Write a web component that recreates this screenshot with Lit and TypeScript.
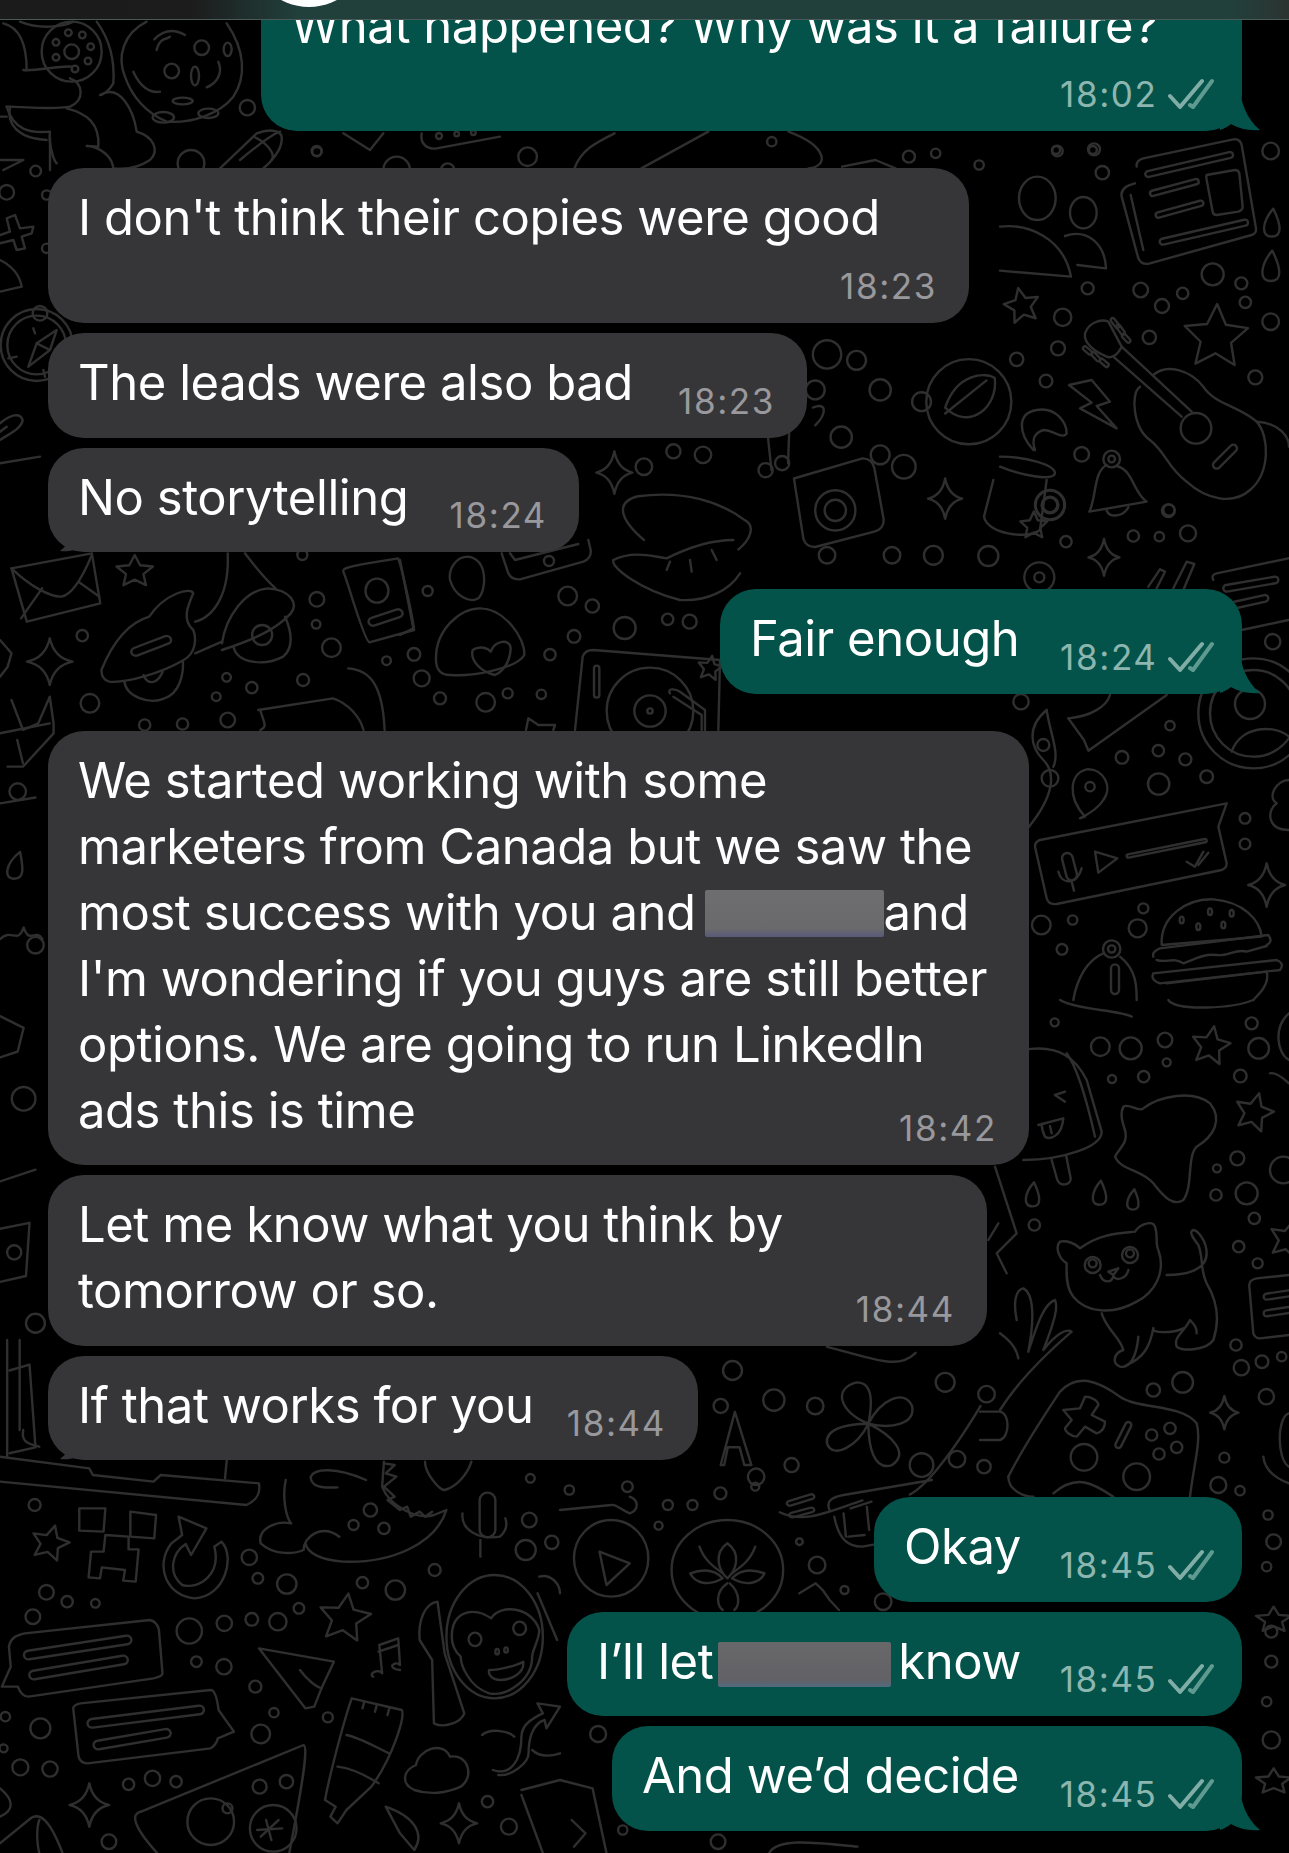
import { LitElement, html, css, svg } from "lit";
import { customElement } from "lit/decorators.js";

const star = (cx: number, cy: number, R: number, rot = -8) => {
  let d = "";
  for (let i = 0; i < 10; i++) {
    const r = i % 2 ? R * 0.48 : R;
    const a = ((rot - 90 + i * 36) * Math.PI) / 180;
    d += (i ? "L" : "M") + (cx + r * Math.cos(a)).toFixed(1) + " " + (cy + r * Math.sin(a)).toFixed(1);
  }
  return d + "Z";
};
const sparkle = (cx: number, cy: number, R: number) => {
  const k = R * 0.16;
  const w = R * 0.85;
  return `M${cx} ${cy - R}Q${cx + k} ${cy - k} ${cx + w} ${cy}Q${cx + k} ${cy + k} ${cx} ${cy + R}Q${cx - k} ${cy + k} ${cx - w} ${cy}Q${cx - k} ${cy - k} ${cx} ${cy - R}Z`;
};
const cap = (x1: number, y1: number, x2: number, y2: number, w: number) => {
  const dx = x2 - x1, dy = y2 - y1, l = Math.hypot(dx, dy), r = w / 2;
  const nx = (-dy / l) * r, ny = (dx / l) * r;
  return `M${x1 + nx} ${y1 + ny}L${x2 + nx} ${y2 + ny}A${r} ${r} 0 0 0 ${x2 - nx} ${y2 - ny}L${x1 - nx} ${y1 - ny}A${r} ${r} 0 0 0 ${x1 + nx} ${y1 + ny}Z`;
};
const ell = (cx: number, cy: number, rx: number, ry: number) =>
  `M${cx - rx} ${cy}A${rx} ${ry} 0 1 0 ${cx + rx} ${cy}A${rx} ${ry} 0 1 0 ${cx - rx} ${cy}Z`;
const drop = (cx: number, cy: number, s: number) =>
  `M${cx + 5} ${cy - s}C${cx - s * 0.6} ${cy - s * 0.2} ${cx - s * 0.8} ${cy + s * 0.9} ${cx} ${cy + s * 0.9}C${cx + s * 0.8} ${cy + s * 0.9} ${cx + s * 0.6} ${cy} ${cx + 5} ${cy - s}Z`;

type Group = { x: number; y: number; zx: number; zy: number; c: number[][]; p: string[] };

const GROUPS: Group[] = [
  // top-left figure, donut and cookie
  { x: 0, y: 0, zx: 3, zy: 3,
    c: [[215,155,90],[215,155,22],[205,98,10],[247,105,10],[272,140,10],[264,183,10],[168,172,10],[168,127,10],[225,207,10],[742,323,23],[950,453,15],[573,490,40],[605,143,22],[515,213,22],[1190,510,40],[1343,510,20],[1317,408,9],[1370,402,7],[1420,398,7]],
    p: ["M70 210C100 215 190 195 215 200","M210 235C250 250 255 300 210 320C150 330 80 320 20 320","M30 320C20 370 50 415 140 420","M200 325C260 340 300 370 295 440L260 438C300 440 340 470 340 510","M150 415L150 510","M10 70C50 80 80 120 80 210","M0 350L20 350","M0 480L70 480L10 510","M60 65C120 90 190 80 220 65",
      "M290 65C330 120 345 180 340 250C330 270 310 285 300 285C360 250 400 330 410 395C460 410 480 450 450 480C420 500 380 510 340 505",
      "M440 65C370 100 350 170 375 230C395 290 440 340 500 365C580 370 660 340 700 290C740 230 735 150 680 70",
      ell(585,228,12,28),ell(683,148,12,20),ell(548,303,30,10),ell(490,352,32,16),ell(625,340,30,14),
      "M463 118C490 90 520 85 555 105","M470 150C480 110 500 120 510 110","M400 215C420 260 450 280 480 275","M620 262C650 250 670 220 655 185",
      "M660 505L770 400C810 385 850 390 845 420C845 450 810 490 790 505","M760 410C790 420 830 460 815 480","M1030 400L1110 450L1150 400","M1265 400C1260 430 1280 450 1310 445L1500 410"] },
  // left edge
  { x: 0, y: 100, zx: 3, zy: 3,
    c: [[107,213,16],[20,277,22],[140,445,14],[140,285,14],[110,735,108],[110,735,88],[120,640,22]],
    p: ["M20 20C40 90 90 100 150 95C145 130 160 180 170 190","M0 405L30 395L20 355L45 345L60 385L100 380L95 400L65 410L75 445L50 450L40 420L0 430","M0 480C40 500 60 530 65 560L0 575","M85 800L110 730L170 690L150 750Z","M110 730L150 750","M25 775L50 770","M100 685L105 700","M130 810L135 830","M0 1020C30 1000 65 985 68 960C60 935 30 945 0 970","M0 995L20 980","M0 1090L120 1070"] },
  // newspaper, people, guitar
  { x: 1000, y: 100, zx: 3, zy: 3,
    c: [[172,153,16],[282,148,18],[307,218,20],[812,153,25],[422,570,22],[486,618,21],[548,580,17],[638,523,33],[724,550,18],[736,607,17],[812,665,25],[263,565,18],[188,652,26],[174,745,21],[448,712,20],[50,778,20],[138,843,19],[766,832,21],[245,1063,22],[505,1232,19],[588,985,46],[150,1215,45],[150,1215,25],[335,1077,25],[335,1077,10]],
    p: [ell(112,295,55,65),ell(250,338,40,47),"M0 380C80 370 190 410 213 530L0 512","M195 408C260 385 315 430 318 505L232 495",
      "M410 200Q408 180 430 175L700 118Q720 115 725 135L768 385Q770 400 755 405L450 490Q425 497 415 475L365 290Q360 260 405 250",
      cap(445,222,690,165,18),cap(458,280,588,245,16),cap(475,345,602,310,16),cap(488,425,735,368,18),
      "M620 225L705 210Q715 210 718 220L728 320Q728 330 715 335L650 345Q640 345 638 335L620 240Q618 228 620 225Z","M392 285L430 450",
      star(66,618,55,-12),star(648,712,100,2),drop(815,370,44),drop(812,500,48),
      "M255 700C265 670 300 655 325 665L365 740C350 770 330 775 320 770C285 755 250 730 255 700Z",
      cap(338,660,352,678,12),cap(355,680,368,698,12),cap(372,708,385,722,12),cap(255,745,270,758,12),cap(280,762,295,778,12),cap(305,782,320,795,12),
      "M340 770L545 950","M365 740L575 935",
      "M460 825C500 790 570 810 610 860C640 910 720 920 770 965C810 1010 810 1120 750 1170C700 1215 620 1200 560 1145C500 1100 500 1060 450 1020C400 985 390 880 420 860",
      cap(650,1095,700,1045,22),"M207 855L275 840L330 905L290 918L350 985L240 925L275 908Z",
      "M100 1050C55 1000 50 940 110 930C170 920 200 970 200 1000C190 1020 160 990 130 990C100 1000 95 1020 105 1050",
      "M0 1070C80 1070 165 1095 165 1120C160 1145 60 1125 0 1100",
      "M320 1095C280 1115 290 1190 268 1235L440 1205C400 1180 400 1110 350 1098","M320 1232C330 1255 370 1250 385 1222","M770 965C840 970 867 1010 867 1040"] },
  // right column, mid
  { x: 960, y: 480, zx: 3, zy: 3,
    c: [[85,228,30],[318,185,17],[520,168,17],[598,170,14],[684,160,24],[627,90,17],[938,485,23],[183,665,23],[630,737,14],[595,812,17],[486,832,19],[676,838,18],[596,912,32],[740,890,19],[855,1015,16],[855,1092,16],[550,1285,15],[533,1345,27],[338,1320,14],[244,1335,28],[306,1408,16],[390,920,14],[238,292,45],[238,292,15],[270,75,43],[270,75,22],[880,700,165],[880,700,130],[870,672,45],[250,795,18],[270,895,25],[455,1407,26],[455,1407,11]],
    p: ["M100 0L72 110C80 160 200 180 240 150L260 0",sparkle(432,232,55),"M565 320L600 268L615 275L590 325","M640 325L680 245L703 252L670 330",
      "M760 300Q752 285 770 280L985 235",cap(800,325,945,300,20),cap(825,375,915,355,20),"M845 450L985 420","M815 815C840 740 940 730 987 770",
      "M260 690C200 740 210 800 250 840C290 880 280 950 207 1040","M260 690C270 760 300 820 280 860",
      "M325 715C390 710 440 680 450 645","M325 715L372 780L385 812L620 645",
      "M375 1010C320 950 330 880 380 868C430 865 460 920 430 960C415 985 390 1000 360 1015Z",
      "M225 1100Q225 1085 240 1080L800 970L775 1040L800 1150Q800 1165 785 1170L290 1272Q265 1275 260 1255Z",
      cap(322,1135,335,1185,32),"M295 1175C305 1215 350 1215 365 1165","M335 1205L342 1232","M405 1115L472 1135L415 1178Z",cap(505,1128,735,1082,10),
      "M680 1145L705 1160L730 1115","M715 1155L745 1118",
      "M605 1395C600 1310 680 1255 760 1258C850 1265 900 1320 905 1370L605 1395","M580 1430Q575 1415 600 1405L925 1365Q940 1385 920 1395",
      "M590 1440C620 1450 640 1430 670 1450C700 1440 730 1420 770 1425C800 1430 830 1405 860 1415L920 1398","M580 1480L950 1440Q975 1450 960 1470L600 1510Q570 1500 580 1480","M620 1510L920 1475C930 1510 900 1540 880 1560",
      ell(665,1320,6,10),ell(715,1340,6,10),ell(750,1295,6,10),ell(790,1335,6,10),ell(815,1300,6,10),
      "M430 1420C380 1440 350 1500 340 1560","M480 1430C530 1470 530 1520 530 1560",cap(465,1465,465,1530,24),sparkle(920,1215,65),
      "M987 900C950 900 920 950 950 970C920 990 920 1050 987 1050"] },
  // right column, popsicle, cat, controller
  { x: 980, y: 1000, zx: 3, zy: 3,
    c: [[224,67,12],[361,140,28],[452,145,33],[555,120,22],[560,187,12],[815,70,18],[836,145,31],[396,237,12],[491,230,17],[781,228,19],[772,475,21],[711,505,12],[708,585,17],[800,580,33],[823,655,17],[776,740,17],[833,790,15],[163,675,17],[768,1035,17],[784,1103,23],[846,1085,19],[905,1070,14],[520,1170,20],[608,1147,31],[859,1190,23],[733,1373,15],[715,1455,24],[780,1472,14],[312,1372,40],[470,1430,40],[515,1305,17],[570,1285,17],[590,1342,17],[537,1362,17],[12,1400,20],[338,795,24],[338,790,12],[450,765,24],[450,760,12],[910,510,40]],
    p: ["M240 0C290 30 420 30 455 50","M565 0C590 35 760 25 820 0",star(692,138,60,10),star(822,338,60,15),star(925,720,60,15),
      "M130 150C240 130 290 180 320 240L365 395C365 440 250 480 130 480","M260 160C290 200 320 300 345 410","M215 480L232 540C245 565 275 550 272 535L258 465","M225 285L255 275","M225 285L255 305","M175 375L250 355C245 410 210 420 195 410C190 400 185 385 185 372","M210 378L215 400",
      drop(157,585,38),drop(358,580,38),drop(458,600,32),
      "M430 320C445 310 465 330 485 328C540 285 640 270 690 310C730 360 700 410 650 440C620 470 640 560 610 600C580 620 550 590 520 550C490 510 420 510 405 470C420 440 445 430 435 390C425 360 420 340 430 320Z",
      "M300 745C360 700 420 700 465 695C480 670 520 660 525 680C535 710 525 730 535 750C560 820 520 880 470 905C400 945 320 940 280 890C255 860 260 810 260 790C235 775 225 740 240 725C260 720 285 730 300 745Z",
      "M385 815L415 805L400 825Z","M360 825C370 850 395 850 400 828C410 845 440 835 445 810",
      "M560 825C620 825 680 810 680 760C680 720 650 690 640 690C625 695 640 715 655 735C670 770 660 810 680 850C710 900 720 960 700 1020C680 1050 610 1055 590 1040C580 1010 610 1000 630 960C650 980 650 990 650 1000",
      "M520 985C510 1000 580 1000 610 985","M365 940C380 990 420 1010 430 1050C400 1060 395 1090 420 1100C450 1105 470 1070 475 1010","M440 1095C490 1075 510 1040 520 985",
      "M60 1230C110 1150 200 1060 275 995C260 985 230 1000 190 1050C225 960 235 920 225 900C195 910 175 960 145 1055C165 950 160 880 130 865C105 870 100 910 110 960","M60 1000C100 1030 110 1050 115 1075","M0 1235L60 1235C90 1240 90 1310 60 1320L0 1320",
      "M85 1430C130 1340 190 1250 240 1175C290 1120 350 1140 420 1190C480 1230 600 1210 650 1270C665 1320 640 1400 630 1490","M85 1430C85 1470 130 1490 160 1490","M220 1480C290 1420 340 1450 400 1490",
      "M250 1230L300 1225L315 1190C330 1190 355 1200 355 1215L335 1245L375 1265C375 1285 365 1295 350 1300L315 1280L290 1310C275 1310 255 1295 255 1285L275 1260Z",
      cap(415,1335,445,1275,18),sparkle(733,1238,50),"M927 825L830 835Q805 840 808 860L820 1000Q825 1015 840 1015L927 1005",cap(860,890,927,880,18),cap(860,940,927,930,18),
      "M870 220C890 215 915 240 927 250","M927 40C880 80 890 160 927 180","M850 1370C855 1420 900 1440 927 1450","M927 1240C890 1250 890 1380 927 1400","M45 500L110 700L50 760L80 820","M25 720L55 670"] },
  // scooter band
  { x: 0, y: 440, zx: 2.613, zy: 3,
    c: [[215,587,17],[828,478,22],[826,553,13],[866,623,28],[235,790,28],[592,712,13],[658,743,17],[565,770,13],[792,720,18],[378,855,17],[477,852,17],[595,840,22],[790,345,15],[1010,662,13],[685,585,30]],
    p: [star(352,395,50,0),sparkle(130,665,70),
      "M265 690C290 620 330 550 390 530C430 460 500 440 505 460C490 500 475 540 505 570C515 600 510 640 480 660C420 700 330 730 285 725C270 720 265 705 265 690Z",cap(355,635,435,600,24),
      "M325 725C330 770 390 795 430 775C470 760 480 700 478 665","M375 705C385 735 410 735 425 695",
      "M580 610C590 530 640 450 700 445C760 450 780 490 760 520C720 570 660 600 580 630","M610 620C620 670 690 680 740 650C770 620 760 570 745 530","M510 640L580 605","M510 545C560 530 600 460 595 340","M640 340C680 400 705 430 720 445",
      "M30 385L240 340L262 490L70 545Z","M30 385C80 440 130 470 160 470C190 465 220 400 240 345","M55 535L110 445","M205 425L260 470",
      "M897 395C895 385 900 380 1040 355C1050 380 1080 540 1082 570L965 607C950 600 905 410 897 395Z",ell(985,452,30,36),cap(975,545,1040,520,24),
      "M30 780L60 870L100 850L130 770L140 850L140 880L60 980L20 980","M0 880L130 850","M45 900L60 970","M0 600L30 640L20 680L0 710",
      "M910 685C970 690 1000 740 1005 870","M675 810L870 775C910 790 940 830 950 870","M680 810C690 850 700 860 680 870"] },
  // dome and turntable
  { x: 400, y: 540, zx: 3, zy: 3,
    c: [[503,168,28],[577,198,20],[674,264,33],[803,238,17],[869,245,21],[522,289,19],[450,344,17],[424,463,14],[323,460,15],[257,487,28],[120,475,18],[65,415,24],[42,343,19],[83,153,15],[447,63,15],[750,513,130],[750,513,47],[750,513,8]],
    p: ["M205 50C165 50 145 90 150 120C165 170 210 190 235 175C260 150 265 60 205 50Z","M108 360C105 270 180 205 240 205C310 205 375 290 373 345C350 385 220 410 150 405C120 405 108 385 108 360Z","M285 405C240 395 210 360 218 330C240 315 265 325 272 335C285 300 330 295 332 325C330 365 310 395 285 405Z",
      "M640 60C700 30 760 50 800 55C870 20 940 0 1000 0","M640 60C630 80 720 150 840 180C920 185 990 150 1020 100","M800 90L810 65","M875 95L870 60","M950 60L935 30",
      "M525 570L548 350Q555 330 580 330L960 360L955 570",cap(590,385,590,465,16),"M810 460C800 445 825 445 840 455L915 510L915 570","M820 470L905 525L905 570",star(930,385,38,10),"M378 570L385 535L415 555L465 555L460 570",
      "M305 40L325 100Q335 120 360 118L550 65Q575 55 572 30L565 0","M330 40L345 60L535 12","M0 60L40 265L0 285"] },
  // bottom-left
  { x: 0, y: 1340, zx: 2.8, zy: 3,
    c: [[1037,510,20],[990,555,15],[1075,565,17],[1485,415,13],[1482,540,22],[1472,630,30],[1545,607,20],[1217,690,18],[1015,728,17],[1107,750,29],[97,495,18],[698,652,23],[722,715,16],[803,732,29],[130,757,22],[188,785,17],[267,790,13],[92,830,22],[530,873,38],[628,850,23],[705,838,19],[778,845,26],[837,805,16],[550,965,16],[627,980,23],[715,1040,18],[767,1118,14],[918,1132,15],[730,1182,28],[113,1165,30],[15,1130,14],[10,1225,12],[57,1282,24],[140,1287,23],[360,1333,17],[427,1315,23],[493,1325,17],[727,1340,21],[802,1325,20],[1365,1385,17],[1425,1460,24],[305,1505,22],[590,1445,70],[637,1405,15],[765,1465,70]],
    p: ["M20 0L20 350","M55 0L55 270","M65 270C60 300 70 310 110 320","M0 350L250 385L260 405L430 425L450 405L725 430C730 460 720 480 690 495L0 425","M635 360L630 415",
      "M800 420C790 470 800 530 815 550C770 540 720 570 730 610C770 650 830 640 850 630C850 590 900 550 950 590","M855 610C860 640 900 660 960 665C1100 670 1220 610 1250 510L1215 525C1170 540 1090 500 1070 440L1075 365","M1075 370L1105 375L1080 400L1110 410L1075 440L1105 470L1085 480L1120 510L1140 500L1150 530L1175 515L1190 530L1210 515",
      "M870 410C880 385 940 380 1025 420","M870 410C870 440 900 445 945 442","M1190 365C1190 400 1230 450 1245 450C1280 440 1310 400 1320 365",
      cap(1365,480,1365,570,44),"M1295 520C1290 570 1340 600 1400 590C1420 570 1420 550 1415 535","M1345 600L1345 650",
      "M222 505L295 505L290 575L222 572Z","M365 515L437 525L432 595L365 590Z","M295 585L360 590L360 628L388 628L380 725L345 722L350 690L285 682L280 715L248 712L255 635L290 635Z",
      "M620 605C660 650 630 770 545 775C470 770 430 680 480 610L510 585L500 530L578 565L535 645L520 612C480 640 470 700 510 735C560 750 620 700 600 620Z",
      star(140,610,55,15),star(965,835,75,8),
      "M25 920C30 890 50 885 70 880L420 840Q440 845 445 870L455 1000Q455 1010 430 1015L80 1070Q60 1070 50 1040L5 1040L30 980Z",cap(80,945,355,900,26),cap(95,1005,345,960,26),
      "M205 1105Q205 1095 225 1090L590 1050Q605 1050 612 1110L655 1175L610 1195Q605 1215 590 1225L245 1270Q225 1270 220 1250Z",cap(258,1150,558,1110,26),cap(275,1215,465,1180,26),
      "M725 925L935 965L900 1045L880 1100L855 1105L725 925Z","M840 990C860 1020 885 1040 900 1045",
      "M1045 1010C1030 1000 1060 985 1070 1000L1062 915L1115 895L1120 975C1105 960 1080 985 1120 990","M1060 935L1115 915",
      ell(1385,890,135,185),"M1265 890C1265 810 1330 800 1375 835C1400 790 1490 800 1510 870C1510 900 1490 930 1490 950C1490 1020 1420 1070 1370 1060C1310 1040 1290 970 1290 950C1270 930 1265 910 1265 890Z",ell(1330,898,18,20),ell(1455,865,18,20),ell(1392,935,5,8),ell(1417,930,5,8),
      "M1370 990C1400 990 1450 975 1465 965C1470 1000 1430 1020 1400 1020C1380 1020 1365 1005 1370 990Z","M1225 785C1190 790 1170 840 1175 900L1210 960L1215 1150C1240 1165 1290 1150 1300 1120L1245 940L1225 785","M1510 710C1540 700 1568 730 1568 760","M1505 760L1560 900",
      "M985 1075L1125 1110C1135 1130 1100 1250 1040 1340L970 1410L945 1450L925 1430L940 1400L910 1380C920 1320 960 1150 985 1075Z","M970 1185C1000 1190 1050 1220 1090 1240","M945 1280C990 1285 1030 1310 1060 1330","M1015 1105L1020 1085","M1050 1115L1055 1095","M1085 1125L1090 1105",
      "M1160 1350C1120 1330 1130 1290 1165 1275C1170 1230 1240 1200 1260 1250C1310 1240 1330 1310 1290 1340C1250 1360 1200 1365 1160 1350Z",
      "M395 1415L850 1215C860 1220 860 1260 810 1539","M395 1415C370 1420 365 1450 440 1539","M720 1470L790 1465","M730 1490L780 1440","M745 1440L760 1500",
      sparkle(250,1395,65),sparkle(1285,1450,60),
      "M1350 1185C1370 1165 1420 1170 1440 1190","M1380 1290C1430 1310 1460 1260 1460 1190C1460 1150 1500 1130 1520 1120L1505 1090L1568 1100L1530 1165L1525 1140C1490 1150 1480 1200 1480 1240C1480 1270 1430 1310 1395 1305","M1490 1230C1510 1250 1540 1250 1568 1240",
      "M1080 1400C1160 1430 1190 1480 1160 1530L1120 1480Z","M1460 1350L1568 1320","M1460 1365L1520 1539","M0 1345C40 1380 40 1410 0 1430","M0 1510L80 1440C110 1410 140 1440 175 1539","M110 1440C100 1470 105 1520 110 1539"] },
  // bottom-right around outgoing bubbles
  { x: 560, y: 1480, zx: 2.151, zy: 3,
    c: [[20,30,14],[232,75,15],[285,75,15],[345,40,18],[420,20,12],[212,137,12],[515,185,10],[553,255,25],[82,762,24],[1523,105,14],[1535,185,22],[1520,260,14],[1530,455,18],[1530,545,18],[1520,665,14],[1530,780,26],[135,1050,14],[340,1085,22],[612,330,12],[695,365,25],[145,20,16]],
    p: [ell(110,235,80,115),"M85 215L150 250L100 315Z",ell(360,270,120,150),"M360 190C330 220 340 270 360 295C380 270 390 220 360 190Z","M280 280C320 260 340 280 350 295C320 320 290 310 280 280Z","M440 280C400 260 380 280 370 295C400 320 430 310 440 280Z","M300 200C310 240 330 260 350 280","M420 200C410 240 390 260 370 280","M360 310C330 340 340 380 350 390","M365 310C390 340 385 380 375 390",
      cap(495,70,540,50,14),cap(500,105,540,90,14),"M580 90C570 60 590 50 610 45L800 0","M590 110C600 180 620 200 650 200L690 190","M610 100L615 170","M625 85L670 65","M620 170L655 165","M660 80L665 150",
      "M0 90L110 75C120 70 130 90 150 100C170 90 170 60 150 50","M515 340L550 310L565 330L580 360L600 390",star(1535,420,40,0),star(1535,905,40,0),"M0 900L70 925L100 1119","M25 1020L55 1060L30 1100","M450 1119C470 1070 560 1090 640 1100"] },
  // band under first bubble
  { x: 240, y: 0, zx: 1.495, zy: 3,
    c: [[115,455,14],[795,425,14],[1220,450,12],[1275,450,12],[1105,495,14],[1000,470,18],[1040,460,14],[430,470,28]],
    p: ["M0 480C30 430 50 400 60 395","M600 505L700 395","M500 505C510 450 530 430 560 400","M820 395C880 440 880 500 850 505","M900 500L950 480L980 505"] },
  // areas read from the whole picture
  { x: 0, y: 0, zx: 0.8464, zy: 0.8464,
    c: [[700,300,12],[725,305,8],[690,330,8],[745,330,9],[712,370,9],[570,382,6],[595,385,7],[545,395,7],[745,385,8],[765,395,10],[700,470,7],[755,470,7],[790,470,8],[780,340,8],[820,340,36],[707,432,17],[707,432,9],[648,398,6],[662,392,6],
      [655,1185,9],[690,1190,7],[620,1160,8],[800,1170,8],[780,1240,10],[640,1250,7],[670,1240,6],[610,1190,6],[810,1235,7],[835,1180,7],[15,670,7],[30,800,7],[20,930,10],[30,1120,8],[12,1060,6]],
    p: ["M800 345C810 315 835 315 842 320C845 345 820 365 800 345Z","M800 350L835 322","M653 398L650 370L668 365L667 392","M688 345C700 340 700 350 690 360",
      "M672 405L730 388Q738 388 740 396L748 440Q748 448 740 450L690 463Q682 463 680 456Z",sparkle(520,400,18),sparkle(800,422,17),star(875,445,12,0),"M545 457C525 440 520 425 540 420C580 415 610 425 630 440C640 445 635 457 625 465",
      "M610 1240L622 1195L636 1240L630 1240L626 1225L616 1225L613 1240Z",
      "M735 1205C710 1195 705 1175 725 1170C740 1170 738 1190 735 1205C745 1185 765 1175 772 1190C775 1205 755 1210 735 1205C755 1215 770 1230 755 1240C740 1245 735 1225 735 1205C725 1225 705 1235 700 1222C698 1210 715 1205 735 1205Z",
      "M830 1190C800 1240 780 1260 770 1265","M730 1270C700 1280 680 1290 660 1280","M700 1140C740 1150 760 1160 775 1145",
      drop(12,733,12),"M0 680L30 675","M0 795C10 785 15 800 20 785C25 800 30 785 36 795","M0 1040L25 1035L22 1080L0 1085","M8 1160L25 1155L30 1225L8 1230","M0 860L20 870L15 890L0 895","M0 1000L30 990"] },
];

type Msg = { t: unknown; time: string; out?: boolean; w?: number; tall?: boolean; tail?: boolean; first?: boolean };

const MSGS: Msg[] = [
  { t: "What happened? Why was it a failure?", time: "18:02", out: true, w: 981, tall: true, tail: true },
  { t: "I don't think their copies were good", time: "18:23", w: 921, tall: true, first: true },
  { t: "The leads were also bad", time: "18:23", w: 759 },
  { t: "No storytelling", time: "18:24", w: 531, tail: true },
  { t: "Fair enough", time: "18:24", out: true, w: 522, tail: true, first: true },
  { t: html`We started working with some<br />marketers from Canada but we saw the<br />most success with you and<span class="red a"></span>and<br />I'm wondering if you guys are still better<br />options. We are going to run LinkedIn<br />ads this is time`, time: "18:42", w: 981, first: true },
  { t: html`Let me know what you think by<br />tomorrow or so.`, time: "18:44", w: 939 },
  { t: "If that works for you", time: "18:44", w: 650, tail: true },
  { t: "Okay", time: "18:45", out: true, w: 368, first: true },
  { t: html`I’ll let<span class="red b"></span>know`, time: "18:45", out: true, w: 675 },
  { t: "And we’d decide", time: "18:45", out: true, w: 630, tail: true },
];

@customElement("app-root")
export class AppRoot extends LitElement {
  static styles = css`
    :host { display: block; font-family: "Inter", "Liberation Sans", sans-serif; }
    .stage { position: relative; height: 1853px; overflow: hidden; background: #000; }
    .doodles { position: absolute; inset: 0; width: 1289px; height: 1853px; fill: none; stroke: #2f2f2f; stroke-linejoin: round; stroke-linecap: round; }
    .doodles path, .doodles ellipse { vector-effect: non-scaling-stroke; stroke-width: 2.4px; }
    .list { position: relative; display: flex; flex-direction: column; gap: 10px; padding: 0 47px 0 48px; margin-top: -24px; }
    .bubble { position: relative; box-sizing: border-box; display: grid; align-self: flex-start; background: #363638; color: #fff; border-radius: 36px; padding: 17px 32px 21.5px 30px; font-size: 49px; line-height: 66px; letter-spacing: -0.45px; }
    .bubble > * { grid-area: 1 / 1; }
    .bubble.out { align-self: flex-end; background: #03534a; padding-right: 28px; }
    .bubble.first { margin-top: 27px; }
    .tall { min-height: 155px; }
    .text { white-space: nowrap; }
    .meta { display: flex; align-items: center; justify-self: end; align-self: end; gap: 10.5px; margin-bottom: -6.5px; font-size: 35px; line-height: 44px; letter-spacing: 1.6px; color: #99999d; white-space: nowrap; }
    .out .meta { color: #8cb6af; }
    .ticks { width: 46px; height: 32px; fill: none; stroke-width: 4px; stroke-linecap: round; stroke-linejoin: round; }
    .ticks .a1 { stroke: #80aea7; }
    .ticks .a2 { stroke: #5f9a90; }
    .bubble > .tail { position: absolute; bottom: 0; width: 40px; height: 44px; }
    .tail.r { right: -18px; fill: #03534a; }
    .tail.l { left: -18px; fill: #363638; }
    .red { display: inline-block; vertical-align: middle; background: linear-gradient(180deg, #6e6e70 0%, #6a6a6c 82%, #58597a 100%); border-radius: 2px; }
    .red.a { width: 179px; height: 47px; margin: -6px 0 0 9px; }
    .red.b { width: 173px; height: 45px; margin: -2px 7px 0 5px; background: linear-gradient(180deg, #68686b 0%, #626266 85%, #4f6a80 100%); }
    .bar { position: absolute; top: 0; left: 0; right: 0; height: 20px; overflow: hidden; border-bottom: 1px solid #4a5a57; box-sizing: border-box; background: linear-gradient(90deg, #1b1b1b 0, #1c1c1c 190px, #21403c 300px, #21403c 1230px, #2c3331 1289px); }
    .avatar { position: absolute; left: 250px; top: -111px; width: 118px; height: 118px; border-radius: 50%; background: #fff; }
  `;

  private tail(out?: boolean) {
    return out
      ? svg`<svg class="tail r" viewBox="0 0 40 44"><path d="M19 0C21 14 26 32 40 43C28 44 18 41 11 37C6 41 0 44 -6 44L10 30Z"/></svg>`
      : svg`<svg class="tail l" viewBox="0 0 40 44"><path d="M21 6C20 18 12 34 0 43C8 44 20 42 29 37C34 41 40 44 46 44L30 20Z"/></svg>`;
  }

  private meta(m: Msg) {
    return html`<div class="meta">
      <span>${m.time}</span>
      ${m.out
        ? svg`<svg class="ticks" viewBox="0 0 46 32"><path class="a1" d="M2 18L12 29L34 3"/><path class="a2" d="M22 27L25 29L44 3"/></svg>`
        : ""}
    </div>`;
  }

  render() {
    return html`<div class="stage">
      <svg class="doodles" viewBox="0 0 1289 1853">
        ${GROUPS.map(
          (g) => svg`<g transform="translate(${g.x} ${g.y}) scale(${1 / g.zx} ${1 / g.zy})">
            ${g.c.map((c) => svg`<ellipse cx=${c[0]} cy=${c[1]} rx=${(c[2] * g.zx) / g.zy} ry=${c[2]} />`)}
            ${g.p.map((d) => svg`<path d=${d} />`)}
          </g>`
        )}
      </svg>
      <div class="list">
        ${MSGS.map((m) => {
          const cls = ["bubble", m.out ? "out" : "", m.first ? "first" : "", m.tall ? "tall" : ""].join(" ");
          return html`<div class=${cls} style=${`width:${m.w}px`}>
            <div class="text">${m.t}</div>
            ${this.meta(m)}
            ${m.tail ? this.tail(m.out) : ""}
          </div>`;
        })}
      </div>
      <div class="bar"><div class="avatar"></div></div>
    </div>`;
  }
}
